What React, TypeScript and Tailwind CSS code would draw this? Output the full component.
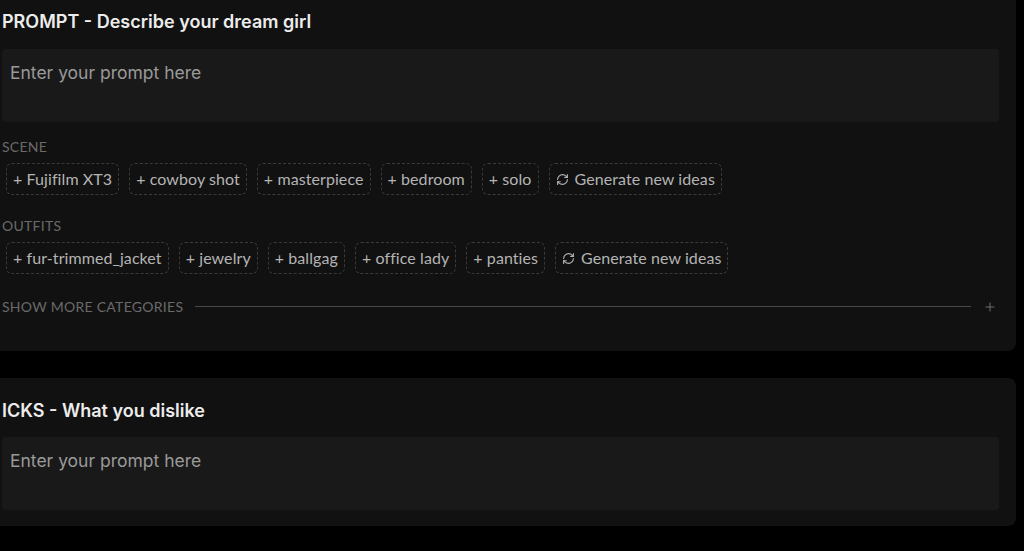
import React from 'react';
import { RefreshCw, Plus } from 'lucide-react';

const scene = ['Fujifilm XT3', 'cowboy shot', 'masterpiece', 'bedroom', 'solo'];
const outfits = ['fur-trimmed_jacket', 'jewelry', 'ballgag', 'office lady', 'panties'];

function Chip({ children }: { children: React.ReactNode }) {
  return (
    <button className="flex h-[32px] items-center gap-1.5 rounded-md border border-dashed border-[#3a3a3a] px-[6px] text-[16px] tracking-[0.005em] text-[#b4b4b4]">
      {children}
    </button>
  );
}

function Category({ label, tags }: { label: string; tags: string[] }) {
  return (
    <div>
      <div className="text-[14px] uppercase tracking-[0.02em] text-[#6a6a6a]">{label}</div>
      <div className="mt-[6px] flex flex-wrap gap-[10px] pl-[4px]">
        {tags.map((t) => (
          <Chip key={t}>+ {t}</Chip>
        ))}
        <Chip>
          <RefreshCw className="h-[13px] w-[13px]" strokeWidth={2} />
          Generate new ideas
        </Chip>
      </div>
    </div>
  );
}

function PromptBox() {
  return (
    <textarea
      placeholder="Enter your prompt here"
      className="block h-[73px] w-[997px] resize-none rounded bg-[#191919] px-[8px] pt-[11px] text-[17.5px] text-[#ddd] placeholder:text-[#9a9a9a] outline-none"
      style={{ fontFamily: 'Inter, "Liberation Sans", sans-serif' }}
    />
  );
}

export default function App() {
  return (
    <div className="min-h-screen overflow-hidden bg-black">
      <div className="-ml-[18px] w-[1034px]" style={{ fontFamily: 'Lato, "Open Sans", sans-serif' }}>
        <div className="-mt-[10px] rounded-lg bg-[#111111] pb-[34px] pl-[20px] pr-[19px] pt-[22px]">
          <h2
            className="text-[18px] font-semibold leading-[20px] text-[#ececec]"
            style={{ fontFamily: 'Inter, "Liberation Sans", sans-serif' }}
          >
            PROMPT - Describe your dream girl
          </h2>
          <div className="mt-[17px]">
            <PromptBox />
          </div>
          <div className="mt-[14px] flex flex-col gap-[20px]">
            <Category label="Scene" tags={scene} />
            <Category label="Outfits" tags={outfits} />
          </div>
          <div className="mt-[22px] flex items-center gap-3 text-[14px] uppercase tracking-[0.02em] text-[#6a6a6a]">
            <span>Show more categories</span>
            <div className="h-px flex-1 bg-[#4a4a4a]" />
            <Plus className="h-[14px] w-[14px] text-[#777]" strokeWidth={1.5} />
          </div>
        </div>

        <div className="mt-[27px] rounded-lg bg-[#111111] pb-[16px] pl-[20px] pr-[19px] pt-[23px]">
          <h2
            className="text-[18px] font-semibold leading-[20px] text-[#ececec]"
            style={{ fontFamily: 'Inter, "Liberation Sans", sans-serif' }}
          >
            ICKS - What you dislike
          </h2>
          <div className="mt-[16px]">
            <PromptBox />
          </div>
        </div>
      </div>
    </div>
  );
}
